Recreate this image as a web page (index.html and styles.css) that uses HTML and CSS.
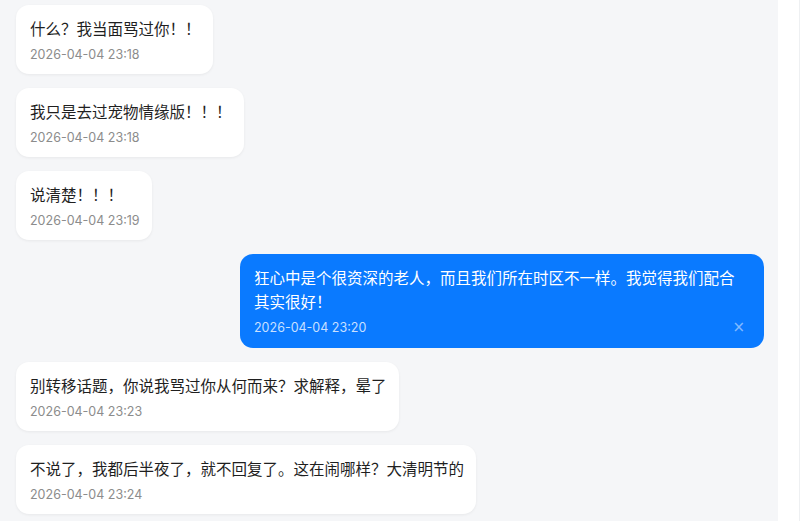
FILE: index.html
```html
<!DOCTYPE html>
<html>
    <head>
        <meta charset="utf-8">
        <title>聊天记录</title>
        <link rel="stylesheet" href="styles.css">
    </head>
    <body>
        <div id="page">
            <div id="chat">
                <div class="msg">
                    <div class="bubble">
                        <div class="text">什么？我当面骂过你！！</div>
                        <div class="meta"><span class="time">2026-04-04 23:18</span></div>
                    </div>
                </div>
                <div class="msg">
                    <div class="bubble">
                        <div class="text">我只是去过宠物情缘版！！！</div>
                        <div class="meta"><span class="time">2026-04-04 23:18</span></div>
                    </div>
                </div>
                <div class="msg">
                    <div class="bubble">
                        <div class="text">说清楚！！！</div>
                        <div class="meta"><span class="time">2026-04-04 23:19</span></div>
                    </div>
                </div>
                <div class="msg mine">
                    <div class="bubble">
                        <div class="text">狂心中是个很资深的老人，而且我们所在时区不一样。我觉得我们配合其实很好！</div>
                        <div class="meta">
                            <span class="time">2026-04-04 23:20</span>
                            <span class="del">×</span>
                        </div>
                    </div>
                </div>
                <div class="msg">
                    <div class="bubble">
                        <div class="text">别转移话题，你说我骂过你从何而来？求解释，晕了</div>
                        <div class="meta"><span class="time">2026-04-04 23:23</span></div>
                    </div>
                </div>
                <div class="msg">
                    <div class="bubble">
                        <div class="text">不说了，我都后半夜了，就不回复了。这在闹哪样？大清明节的</div>
                        <div class="meta"><span class="time">2026-04-04 23:24</span></div>
                    </div>
                </div>
            </div>
            <div id="side"></div>
        </div>
    </body>
</html>
```

FILE: styles.css
```css
html, body {
    height: 100%;
}
body {
    margin: 0;
    background-color: white;
    font-family: "Noto Sans CJK SC", "Noto Sans", sans-serif;
    overflow: hidden;
}

#page {
    display: flex;
    height: 100%;
}

#chat {
    flex: 1;
    background-color: #f5f6f8;
    padding: 5px 14px 0 16px;
    display: flex;
    flex-direction: column;
    gap: 14px;
}

#side {
    width: 21px;
    border-right: 1px solid #eef0f2;
    background-color: white;
}

.msg {
    display: flex;
}

.msg.mine {
    justify-content: flex-end;
}

.bubble {
    max-width: 524px;
    box-sizing: border-box;
    padding: 11px 12px 11px 14px;
    background-color: white;
    border-radius: 13px;
    box-shadow: 0 1px 3px rgba(0, 0, 0, 0.06);
}

.text {
    font-size: 15.5px;
    line-height: 24px;
    color: #1f1f1f;
}

.meta {
    display: flex;
    justify-content: space-between;
    align-items: center;
    margin-top: 5px;
    height: 18px;
}

.time {
    font-family: Inter, "Noto Sans", sans-serif;
    font-size: 12.5px;
    color: #8c8c8c;
}

.mine .bubble {
    padding-right: 16px;
    padding-bottom: 12px;
    background-color: #0a7aff;
    box-shadow: none;
}

.mine .text {
    color: white;
}

.mine .time {
    color: rgba(255, 255, 255, 0.78);
}

.del {
    font-family: "DejaVu Sans", sans-serif;
    font-size: 15px;
    color: rgba(255, 255, 255, 0.5);
    margin-right: 3px;
}
```
